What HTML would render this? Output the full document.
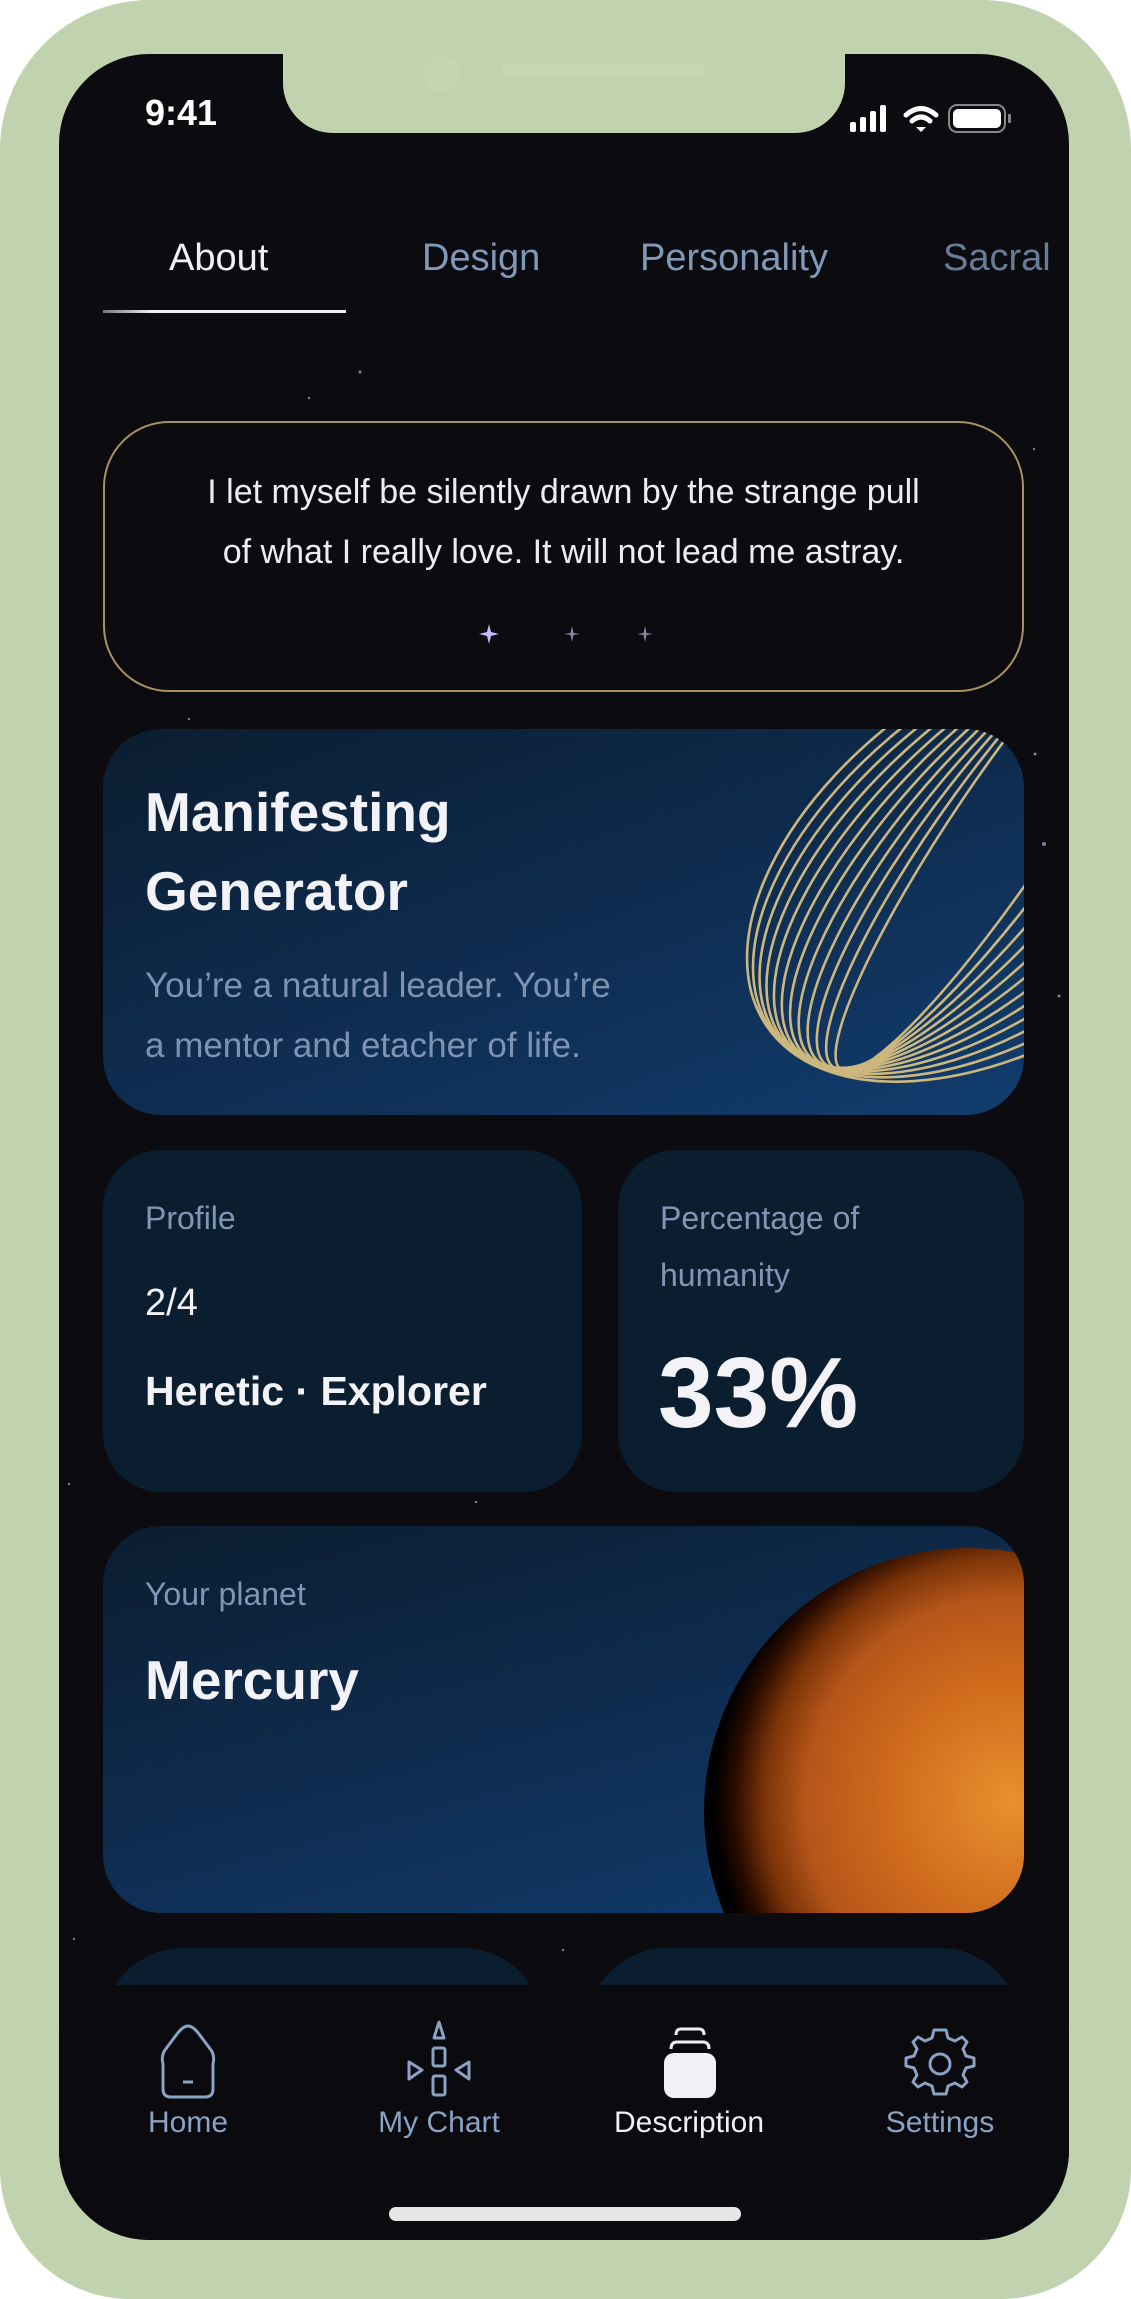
<!DOCTYPE html>
<html><head><meta charset="utf-8"><style>
*{margin:0;padding:0;box-sizing:border-box}
html,body{width:1131px;height:2299px;background:#fff;overflow:hidden;font-family:"Liberation Sans",sans-serif}
.frame{position:absolute;left:0;top:0;width:1131px;height:2299px;background:#c0d2ae;border-radius:150px 150px 130px 130px}
.screen{position:absolute;left:59px;top:54px;width:1010px;height:2186px;background:#0b0b10;border-radius:90px;overflow:hidden}
.abs{position:absolute}
.notch{position:absolute;left:283px;top:54px;width:562px;height:79px;background:#c0d2ae;border-radius:0 0 50px 50px}
.t{position:absolute;white-space:nowrap}
.card{position:absolute;border-radius:58px;overflow:hidden}
</style></head><body>
<div class="frame"></div>
<div class="screen">
 <svg class="abs" style="left:0;top:0" width="1010" height="2186">
  <g fill="#8a7a9a">
   <circle cx="301" cy="318" r="1.5"/><circle cx="250" cy="344" r="1.2"/><circle cx="318" cy="373" r="1.2"/><circle cx="543" cy="369" r="1.2"/><circle cx="786" cy="370" r="1.5"/><circle cx="975" cy="395" r="1.2"/><circle cx="976" cy="700" r="1.5"/><circle cx="985" cy="790" r="2"/><circle cx="1000" cy="942" r="1.5"/><circle cx="10" cy="1430" r="1.2"/><circle cx="417" cy="1448" r="1.2"/><circle cx="504" cy="1896" r="1.2"/><circle cx="595" cy="1925" r="1.5"/><circle cx="15" cy="1885" r="1.2"/><circle cx="130" cy="665" r="1.2"/>
  </g>
 </svg>
 <div class="t" style="left:86px;top:38px;font-size:36px;font-weight:bold;color:#fff">9:41</div>
 <svg class="abs" style="left:791px;top:47px" width="190" height="40">
  <rect x="0" y="21" width="6" height="10" rx="2" fill="#fff"/><rect x="10" y="16" width="6" height="15" rx="2" fill="#fff"/><rect x="20" y="10" width="6" height="21" rx="2" fill="#fff"/><rect x="30" y="4" width="6" height="27" rx="2" fill="#fff"/>
  <path d="M56 14 Q71 1 86 14" stroke="#fff" stroke-width="5" fill="none" stroke-linecap="round"/><path d="M62 20 Q71 12 80 20" stroke="#fff" stroke-width="5" fill="none" stroke-linecap="round"/><path d="M66 26 L71 31 L76 26 Z" fill="#fff"/>
  <rect x="99" y="4" width="56" height="27" rx="8" fill="none" stroke="#888" stroke-width="2"/><rect x="103" y="8" width="48" height="19" rx="5" fill="#fff"/><rect x="158" y="13" width="3" height="9" rx="1" fill="#888"/>
 </svg>
 <div class="t" style="left:110px;top:183px;font-size:38px;color:#f0f0f5">About</div>
 <div class="t" style="left:363px;top:183px;font-size:38px;color:#8199b8">Design</div>
 <div class="t" style="left:581px;top:183px;font-size:38px;color:#8199b8">Personality</div>
 <div class="t" style="left:884px;top:183px;font-size:38px;color:#8199b8;opacity:.8">Sacral</div>
 <div class="abs" style="left:44px;top:256px;width:243px;height:3px;background:linear-gradient(90deg,#777,#eee 20%,#eee)"></div>
 <div class="card" style="left:44px;top:367px;width:921px;height:271px;border:2px solid #a8915f;border-radius:66px;background:#0b0b10"></div>
 <div class="t" style="left:44px;width:921px;top:408px;font-size:34px;line-height:60px;color:#ececf2;text-align:center;white-space:normal">I let myself be silently drawn by the strange pull<br>of what I really love. It will not lead me astray.</div>
 <svg class="abs" style="left:400px;top:560px" width="200" height="40">
  <g fill="#c9b9ff"><path d="M30 10 L32 18 L40 20 L32 22 L30 30 L28 22 L20 20 L28 18Z"/></g>
  <g fill="#8a86a0"><path d="M113 12 L114.5 19 L121 20 L114.5 21 L113 28 L111.5 21 L105 20 L111.5 19Z"/><path d="M186 12 L187.5 19 L194 20 L187.5 21 L186 28 L184.5 21 L178 20 L184.5 19Z"/></g>
 </svg>
 <div class="card" style="left:44px;top:675px;width:921px;height:386px;background:linear-gradient(160deg,#0b1d30 0%,#0f2f55 60%,#113d6e 100%)">
  <svg class="abs" style="left:0;top:0" width="921" height="386">
   <g fill="none" stroke="#cdb77c" stroke-width="2.6" transform="translate(40 5)">
    <ellipse cx="860" cy="95" rx="290" ry="50" transform="rotate(-56 860 95)"/>
    <ellipse cx="862" cy="97" rx="292" ry="62" transform="rotate(-54 862 97)"/>
    <ellipse cx="864" cy="99" rx="294" ry="74" transform="rotate(-52 864 99)"/>
    <ellipse cx="866" cy="101" rx="296" ry="86" transform="rotate(-50 866 101)"/>
    <ellipse cx="868" cy="103" rx="298" ry="98" transform="rotate(-48 868 103)"/>
    <ellipse cx="870" cy="105" rx="300" ry="110" transform="rotate(-46 870 105)"/>
    <ellipse cx="872" cy="107" rx="302" ry="122" transform="rotate(-44 872 107)"/>
    <ellipse cx="874" cy="109" rx="304" ry="134" transform="rotate(-42 874 109)"/>
    <ellipse cx="876" cy="111" rx="306" ry="146" transform="rotate(-40 876 111)"/>
    <ellipse cx="878" cy="113" rx="308" ry="158" transform="rotate(-38 878 113)"/>
    <ellipse cx="880" cy="115" rx="310" ry="170" transform="rotate(-36 880 115)"/>
    <ellipse cx="882" cy="117" rx="312" ry="182" transform="rotate(-34 882 117)"/>
   </g>
  </svg>
  <div class="t" style="left:42px;top:44px;font-size:55px;font-weight:bold;line-height:79px;color:#f2f2f7">Manifesting<br>Generator</div>
  <div class="t" style="left:42px;top:227px;font-size:35px;line-height:60px;color:#7e93b2">You’re a natural leader. You’re<br>a mentor and etacher of life.</div>
 </div>
 <div class="card" style="left:44px;top:1096px;width:479px;height:342px;background:#0b1e30">
  <div class="t" style="left:42px;top:50px;font-size:32px;color:#8196b4">Profile</div>
  <div class="t" style="left:42px;top:132px;font-size:38px;color:#f2f2f7">2/4</div>
  <div class="t" style="left:42px;top:218px;font-size:41px;font-weight:bold;color:#f2f2f7">Heretic · Explorer</div>
 </div>
 <div class="card" style="left:559px;top:1096px;width:406px;height:342px;background:#0b1e30">
  <div class="t" style="left:42px;top:50px;font-size:32px;line-height:57px;color:#8196b4;transform:translateY(-10px)">Percentage of<br>humanity</div>
  <div class="t" style="left:40px;top:186px;font-size:100px;font-weight:bold;color:#f2f2f7">33%</div>
 </div>
 <div class="card" style="left:44px;top:1472px;width:921px;height:387px;background:linear-gradient(165deg,#0b1d30 0%,#0f2f55 60%,#113d6e 100%)">
  <div class="t" style="left:42px;top:50px;font-size:32px;color:#8196b4">Your planet</div>
  <div class="t" style="left:42px;top:122px;font-size:55px;font-weight:bold;color:#f2f2f7">Mercury</div>
  <div class="abs" style="left:601px;top:22px;width:528px;height:528px;border-radius:50%;background:radial-gradient(circle at 58% 48%,#e8902e 0%,#cf6a1c 30%,#b5551a 50%,#7a3308 60%,#2a0c00 67%,#000 72%)"></div>
 </div>
 <div class="card" style="left:44px;top:1894px;width:440px;height:200px;background:#0b1e30;border-radius:80px 80px 0 0"></div>
 <div class="card" style="left:528px;top:1894px;width:433px;height:200px;background:#0b1e30;border-radius:80px 80px 0 0"></div>
 <div class="abs" style="left:0;top:1931px;width:1010px;height:255px;background:#0a0a0f;border-radius:60px 60px 0 0"></div>
 <svg class="abs" style="left:0;top:1958px" width="1010" height="110">
  <g fill="none" stroke="#8aa2c4" stroke-width="3" stroke-linejoin="round">
   <path d="M129 14 Q124 14 118 22 L106 38 Q102 44 104 52 L104 77 Q104 85 112 85 L146 85 Q154 85 154 77 L154 52 Q156 44 152 38 L140 22 Q134 14 129 14Z"/>
   <path d="M124 70 L134 70"/>
   <path d="M380 10 L375 26 L385 26Z"/>
   <rect x="374" y="36" width="12" height="18" rx="2"/><rect x="374" y="64" width="12" height="19" rx="2"/>
   <path d="M350 50 L363 58 L350 67Z"/><path d="M410 50 L397 58 L410 67Z"/>
   <circle cx="881" cy="52" r="10"/>
   <path d="M881 18 l6 0 l2 8 l7 3 l7-4 l5 5 l-4 7 l3 7 l8 2 l0 8 l-8 2 l-3 7 l4 7 l-5 5 l-7-4 l-7 3 l-2 8 l-12 0 l-2-8 l-7-3 l-7 4 l-5-5 l4-7 l-3-7 l-8-2 l0-8 l8-2 l3-7 l-4-7 l5-5 l7 4 l7-3 l2-8Z"/>
  </g>
  <g fill="none" stroke="#f0f0f5" stroke-width="3"><path d="M617 23 Q617 17 622 17 L640 17 Q645 17 645 23"/><path d="M612 37 Q612 30 618 30 L644 30 Q650 30 650 37"/></g>
  <rect x="605" y="41" width="52" height="45" rx="10" fill="#f0f0f5"/>
 </svg>
 <div class="t" style="left:0;width:258px;top:2052px;text-align:center;font-size:30px;color:#8aa2c4">Home</div>
 <div class="t" style="left:258px;width:244px;top:2052px;text-align:center;font-size:30px;color:#8aa2c4">My Chart</div>
 <div class="t" style="left:510px;width:240px;top:2052px;text-align:center;font-size:30px;color:#f0f0f5">Description</div>
 <div class="t" style="left:760px;width:242px;top:2052px;text-align:center;font-size:30px;color:#8aa2c4">Settings</div>
 <div class="abs" style="left:330px;top:2153px;width:352px;height:14px;border-radius:7px;background:#e6e6e6"></div>
</div>
<div class="notch"></div>
<div class="abs" style="left:424px;top:56px;width:36px;height:36px;border-radius:50%;background:#c4d5b2"></div>
<div class="abs" style="left:502px;top:64px;width:203px;height:11px;border-radius:6px;background:#c6d7b4"></div>
</body></html>
